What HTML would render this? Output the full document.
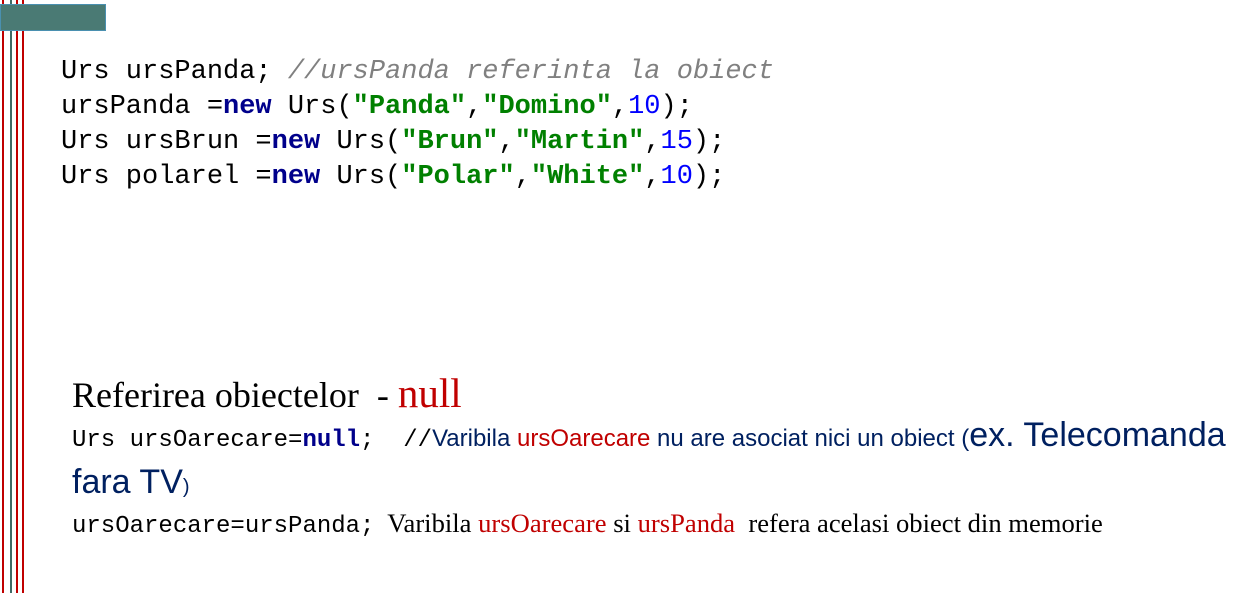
<!DOCTYPE html>
<html><head><meta charset="utf-8"><style>
body{margin:0;width:1247px;height:593px;background:#fff;position:relative;overflow:hidden}
.v{position:absolute;top:0;height:593px;width:2px}
.m{font-family:"Liberation Mono",monospace;white-space:pre;position:absolute}
.k{color:#00008b;font-weight:bold}.s{color:#008000;font-weight:bold}.n{color:#0000ff}.c{color:#808080;font-style:italic}
.r{color:#c00000}
</style></head><body>
<div class="v" style="left:2px;background:#c00000"></div>
<div class="v" style="left:10px;background:#3f6b66"></div>
<div class="v" style="left:16px;background:#c00000"></div>
<div class="v" style="left:22px;background:#c00000"></div>
<div style="position:absolute;left:0;top:4px;width:106px;height:27px;background:#4a7a74;border:1px solid #4a90b0;box-sizing:border-box"></div>
<div class="m" style="left:61px;top:55px;font-size:27px;line-height:35px;color:#000">Urs ursPanda; <span class="c">//ursPanda referinta la obiect</span>
ursPanda =<span class="k">new</span> Urs(<span class="s">"Panda"</span>,<span class="s">"Domino"</span>,<span class="n">10</span>);
Urs ursBrun =<span class="k">new</span> Urs(<span class="s">"Brun"</span>,<span class="s">"Martin"</span>,<span class="n">15</span>);
Urs polarel =<span class="k">new</span> Urs(<span class="s">"Polar"</span>,<span class="s">"White"</span>,<span class="n">10</span>);</div>
<div style="position:absolute;left:72px;top:369px;font-family:'Liberation Serif',serif;font-size:36px;white-space:pre">Referirea obiectelor  - <span class="r" style="font-size:41px">null</span></div>
<div style="position:absolute;left:72px;top:416px;white-space:nowrap;color:#002060;font-family:'Liberation Sans',sans-serif;font-size:24px"><span class="m" style="position:static;font-size:24px;color:#000">Urs ursOarecare=<span class="k">null</span>;  //</span>Varibila <span class="r">ursOarecare</span> nu are asociat nici un obiect (<span style="font-size:34px">ex. Telecomanda</span></div>
<div style="position:absolute;left:72px;top:463px;color:#002060;font-family:'Liberation Sans',sans-serif;font-size:34px">fara TV<span style="font-size:20px">)</span></div>
<div style="position:absolute;left:72px;top:508px;white-space:pre;font-family:'Liberation Serif',serif;font-size:26.6px"><span class="m" style="position:static;font-size:24px">ursOarecare=ursPanda;</span>  Varibila <span class="r">ursOarecare</span> si <span class="r">ursPanda</span>  refera acelasi obiect din memorie</div>
</body></html>
